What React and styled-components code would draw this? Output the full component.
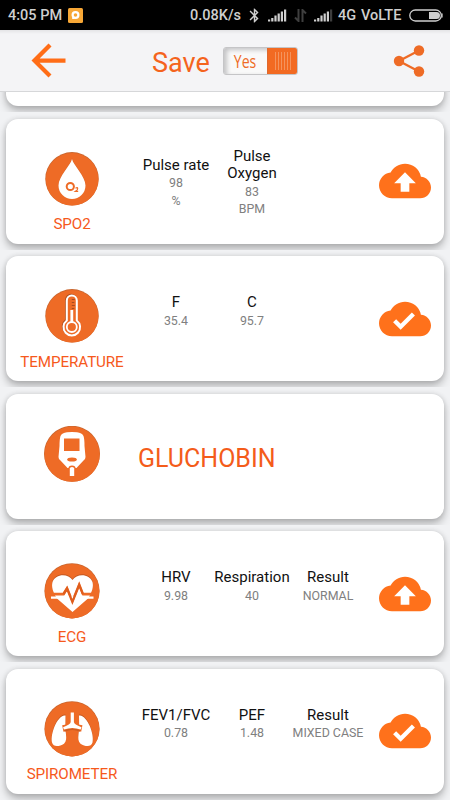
import styled, { createGlobalStyle } from 'styled-components'
import { MdArrowBack, MdBluetooth, MdCloudDone, MdCloudUpload } from 'react-icons/md'

const GlobalStyle = createGlobalStyle`
  * {
    box-sizing: border-box;
  }

  body {
    margin: 0;
    font-family: Roboto, sans-serif;
    background: #f1f2f4;
  }
`

const Screen = styled.div`
  width: 450px;
  height: 800px;
  overflow: hidden;
  display: flex;
  flex-direction: column;
  background: #f1f2f4;
`

const StatusBar = styled.div`
  height: 30px;
  flex-shrink: 0;
  display: flex;
  align-items: center;
  padding: 1px 7px 0 8px;
  background: #000;
  color: #cfcfcf;
  font-size: 14.5px;
  font-weight: 500;
  white-space: nowrap;

  svg {
    display: block;
    flex-shrink: 0;
  }
`

const StatusText = styled.span`
  width: ${(p) => p.$width}px;
  margin-right: ${(p) => p.$gap || 0}px;
`

const StatusIcons = styled.div`
  margin-left: auto;
  display: flex;
  align-items: center;
`

const SignalGroup = styled.div`
  display: flex;
  align-items: center;
  gap: 7px;
  margin: 0 5px;
`

const Header = styled.header`
  height: 62.2px;
  flex-shrink: 0;
  display: flex;
  align-items: center;
  justify-content: space-between;
  padding: 0 25px 0 23px;
  background: linear-gradient(#e4e4e6, #f4f4f6 4px);
  border-bottom: 1px solid #d6d7d9;
  color: #ff6d17;

  svg {
    display: block;
  }
`

const SaveGroup = styled.div`
  display: flex;
  align-items: center;
  gap: 13px;
  margin-right: 17px;
`

const SaveText = styled.span`
  width: 58px;
  padding-top: 4px;
  font-size: 27px;
  line-height: 32px;
  color: #f4631d;
  white-space: nowrap;
`

const Toggle = styled.div`
  width: 75px;
  height: 28px;
  display: flex;
  justify-content: space-between;
  border: 1px solid #c5c5c7;
  border-radius: 3px;
  overflow: hidden;
  background: #f9f9f9;
  box-shadow: inset 3px 2px 4px #c4c4c6;
`

const ToggleText = styled.span`
  width: 42px;
  font-family: 'Open Sans', sans-serif;
  font-size: 18.5px;
  line-height: 26px;
  text-align: center;
  transform: scaleX(0.76);
  color: #ee6b26;
`

const Thumb = styled.div`
  width: 31px;
  margin: -1px;
  display: flex;
  align-items: center;
  justify-content: center;
  gap: 2px;
  background: #f26a22;
  border: 1px solid #df6a2e;
  border-radius: 1px;
`

const Grip = styled.i`
  width: 1px;
  height: 18px;
  background: #f4935d;
`

const List = styled.main`
  flex: 1;
  min-height: 0;
  overflow: hidden;
  display: flex;
  flex-direction: column;
`

const Item = styled.div`
  height: ${(p) => p.$height || 137.5}px;
  flex-shrink: 0;
  overflow: hidden;
  display: flex;
  flex-direction: column;
  justify-content: flex-end;
  padding: 0 6px 6px;
`

const Card = styled.section`
  height: 125px;
  flex-shrink: 0;
  display: flex;
  align-items: center;
  padding-right: 13px;
  background: #fff;
  border-radius: 12px;
  box-shadow: 0 0 5px rgba(0, 0, 0, 0.12), 0 5px 8px rgba(0, 0, 0, 0.26);
`

const Device = styled.div`
  width: 132px;
  height: 125px;
  display: flex;
  flex-direction: column;
  align-items: center;
  padding-top: 32px;

  svg {
    display: block;
    flex-shrink: 0;
  }
`

const DeviceName = styled.span`
  margin-top: 8.5px;
  font-size: 15.2px;
  line-height: 18px;
  color: #f6591c;
  letter-spacing: -0.1px;
`

const BigName = styled.h2`
  margin: 5px 0 0;
  font-size: 25px;
  font-weight: 400;
  line-height: 30px;
  color: #f45c1a;
`

const Column = styled.div`
  width: 76px;
  display: flex;
  flex-direction: column;
  align-items: center;
  text-align: center;
  padding-top: 3.5px;
`

const ColumnTitle = styled.span`
  font-size: 15px;
  line-height: 17.5px;
  color: #111;
  margin: 0 -2px;
`

const ColumnValue = styled.span`
  min-height: 17.5px;
  font-size: 12.4px;
  line-height: 17.5px;
  color: #808080;
  white-space: nowrap;
`

const CloudIcon = styled.div`
  margin-left: auto;
  color: #ff711b;

  svg {
    display: block;
  }
`

const ORANGE = '#ee6b26'

function Badge({ r = 26.7, children }) {
  return (
    <svg width="56" height="56" viewBox="0 0 56 56">
      <circle cx="28" cy="27.800" r={r} fill="#c9662f" />
      <circle cx="28.100" cy="28.200" r={r - 0.4} fill={ORANGE} />
      {children}
    </svg>
  )
}

function DropIcon() {
  return (
    <Badge>
      <path d="M28 9c-1.500 6.500-13.500 17.500-13.500 26.500a13.500 13.500 0 0 0 27 0C41.500 26.500 29.500 15.500 28 9z" fill="#b9541f" opacity="0.5" transform="translate(0 -1.500)" />
      <path d="M28 8c-1.500 6.500-13.500 17.500-13.500 26.500a13.500 13.500 0 0 0 27 0C41.500 25.500 29.500 14.500 28 8z" fill="#fff" />
      <circle cx="26.300" cy="35.500" r="3.600" fill="none" stroke={ORANGE} strokeWidth="2" />
      <path d="M31.500 37.300q2-1.500 2.200 0t-2.200 3h2.700" fill="none" stroke={ORANGE} strokeWidth="1.200" />
    </Badge>
  )
}

function ThermometerIcon() {
  return (
    <Badge>
      <path d="M22.800 32.500V12.500a5 5 0 0 1 10 0v20a8.300 8.300 0 1 1-10 0z" fill="none" stroke="#ad4f20" strokeWidth="2" transform="translate(-0.700 -0.700)" />
      <path d="M22.800 32.500V12.500a5 5 0 0 1 10 0v20a8.300 8.300 0 1 1-10 0z" fill={ORANGE} stroke="#fff" strokeWidth="2" />
      <path d="M27.800 22v12" stroke="#fff" strokeWidth="2.800" />
      <circle cx="27.800" cy="39" r="5" fill={ORANGE} stroke="#fff" strokeWidth="1.800" />
      <path d="M27.800 11.500h3M27.800 14.500h2.500M27.800 17.500h3M27.800 20.500h2.500" stroke="#a94b1e" strokeWidth="1.200" />
    </Badge>
  )
}

function GlucometerIcon() {
  return (
    <Badge r={28}>
      <path d="M16.500 10Q18 7 23 6.300q5-.8 10 0Q38 7 39.500 10q1 3 1 10l1 11q0 2-2 3.500L32.500 42h-9l-7-7.500q-2-1.500-2-3.500l1-11q0-7 1-10z" fill="#fff" />
      <rect x="20" y="12.500" width="15.500" height="12.500" fill={ORANGE} />
      <ellipse cx="28" cy="33.500" rx="4.800" ry="2" fill={ORANGE} />
      <path d="M24.500 50V42q0-2.500 3.500-2.500t3.500 2.500v8z" fill={ORANGE} />
      <path d="M25.800 50V42.500q0-1.500 2.200-1.500t2.200 1.500V50z" fill="#fff" />
    </Badge>
  )
}

function HeartIcon() {
  const heart = 'M28.500 17C24 10 11.500 10.500 8.500 19c-1.300 5 .5 10 4.500 16.500L28.500 49 44 35.500c4-6.500 5.800-11.500 4.500-16.500C45.500 10.500 33 10 28.500 17z'
  return (
    <Badge r={27.6}>
      <path d={heart} fill="#a94b1e" opacity="0.6" transform="translate(0 -1)" />
      <path d={heart} fill="#fff" />
      <path d="M5 31.200h14.500l3.500-5.700 5.400 13.500 6.800-17 3.600 9.200H52" fill="none" stroke={ORANGE} strokeWidth="2.800" />
      <path d="M5 38.300l5.500-1.500L15 40l-4 3z" fill={ORANGE} />
      <path d="M7 34.700h42.500" stroke="#fff" strokeWidth="2.300" />
      <path d="M20.500 34.700l2.600-4 5.300 13 6.700-16.500 3 7.500" fill="none" stroke="#fff" strokeWidth="2" />
      <path d="M19.500 31.200l3.500-5.700 5.400 13.500 6.800-17 3.600 9.200" fill="none" stroke="#df5d1d" strokeWidth="2.200" />
    </Badge>
  )
}

function LungsIcon() {
  const left = 'M21.500 14.500c-4-1-8.500 5-10.800 10.500C8.300 31 7 37 8 41.500c1.300 5 7.500 4 12 1.200 2.500-2.300 2.400-5.500 2-9.200L21.300 27z'
  const right = 'M35 14.500c4-1 8.500 5 10.800 10.500 2.400 6 3.700 12 2.700 16.500-1.300 5-7.500 4-12 1.200-2.500-2.300-2.400-5.500-2-9.200l.7-6.500z'
  return (
    <Badge r={27.6}>
      <path d={left + right} fill="#a94b1e" opacity="0.6" transform="translate(0 -1)" />
      <path d={left + right} fill="#fff" />
      <path d="M28.300 20v3q-2 3-9.500 4.500M28.300 23q2 3 9.500 4.500" fill="none" stroke={ORANGE} strokeWidth="6.500" />
      <path d="M20.500 30q7.800-3.500 15.600 0" fill="none" stroke="#cf5c20" strokeWidth="1.600" />
      <path d="M26.700 11.500h3.200v9.500q0 2.500 7.600 5.200l-.8 2.300q-4.500-1.500-8.400-1.500t-8.400 1.500l-.8-2.300q7.600-2.700 7.600-5.200z" fill="#fff" />
    </Badge>
  )
}

function ShareIcon() {
  return (
    <svg width="32" height="34" viewBox="0 0 32 34" fill="#ee6b26" stroke="#ee6b26">
      <path d="M26 6.500L6 17l20 10.500" fill="none" strokeWidth="2.300" />
      <circle cx="6" cy="17" r="5.200" stroke="none" />
      <circle cx="26" cy="6.500" r="5.200" stroke="none" />
      <circle cx="26" cy="27.500" r="5.200" stroke="none" />
    </svg>
  )
}

function SignalIcon({ weak }) {
  const bars = [2, 3.5, 6, 8, 10, 12]
  return (
    <svg width="19" height="13" viewBox="0 0 19 13">
      {bars.map((h, i) => (
        <rect key={i} x={i * 3.2} y={12.5 - h} width="2.2" height={h} fill={weak && i === 5 ? '#3d3d3d' : '#cfcfcf'} />
      ))}
    </svg>
  )
}

function DataArrows() {
  return (
    <svg width="13" height="13" viewBox="0 0 13 13" fill="none" stroke="#3f3f3f" strokeWidth="2">
      <path d="M4.500 0v12L1 8.500M8.500 13V1L12 4.500" />
    </svg>
  )
}

function Battery() {
  return (
    <svg width="34" height="13" viewBox="0 0 34 13">
      <rect x="0.800" y="1" width="31.500" height="11" rx="5.500" fill="none" stroke="#cfcfcf" strokeWidth="1.300" />
      <path d="M20 3h7.500a3.500 3.500 0 0 1 0 7H20z" fill="#cfcfcf" />
      <path d="M33 4.500v4" stroke="#cfcfcf" strokeWidth="1.300" />
    </svg>
  )
}

function NoticeIcon() {
  return (
    <svg width="15" height="15" viewBox="0 0 15 15">
      <rect width="15" height="15" rx="1.500" fill="#f7a736" />
      <circle cx="7.500" cy="7" r="2.900" fill="none" stroke="#fff" strokeWidth="2.200" />
      <path d="M4.200 8v3h3z" fill="#fff" />
    </svg>
  )
}

const devices = [
  {
    name: 'SPO2',
    icon: DropIcon,
    cloud: MdCloudUpload,
    columns: [
      { title: 'Pulse rate', value: '98', unit: '%' },
      { title: 'Pulse Oxygen', value: '83', unit: 'BPM' }
    ]
  },
  {
    name: 'TEMPERATURE',
    icon: ThermometerIcon,
    cloud: MdCloudDone,
    columns: [
      { title: 'F', value: '35.4' },
      { title: 'C', value: '95.7' }
    ]
  },
  { name: 'GLUCHOBIN', icon: GlucometerIcon },
  {
    name: 'ECG',
    icon: HeartIcon,
    cloud: MdCloudUpload,
    columns: [
      { title: 'HRV', value: '9.98' },
      { title: 'Respiration', value: '40' },
      { title: 'Result', value: 'NORMAL' }
    ]
  },
  {
    name: 'SPIROMETER',
    icon: LungsIcon,
    cloud: MdCloudDone,
    columns: [
      { title: 'FEV1/FVC', value: '0.78' },
      { title: 'PEF', value: '1.48' },
      { title: 'Result', value: 'MIXED CASE' }
    ]
  }
]

function DeviceCard({ device }) {
  const { name, icon: Icon, cloud: Cloud, columns } = device

  return (
    <Item>
      <Card>
        <Device>
          <Icon />
          {columns && <DeviceName>{name}</DeviceName>}
        </Device>
        {columns ? (
          columns.map((col, index) => (
            <Column key={index}>
              <ColumnTitle>{col.title}</ColumnTitle>
              <ColumnValue>{col.value}</ColumnValue>
              <ColumnValue>{col.unit}</ColumnValue>
            </Column>
          ))
        ) : (
          <BigName>{name}</BigName>
        )}
        {Cloud && (
          <CloudIcon>
            <Cloud size={52} />
          </CloudIcon>
        )}
      </Card>
    </Item>
  )
}

export default function App() {
  return (
    <Screen>
      <GlobalStyle />
      <StatusBar>
        <StatusText $width={60}>4:05 PM</StatusText>
        <NoticeIcon />
        <StatusIcons>
          <StatusText $width={52} $gap={4}>0.08K/s</StatusText>
          <MdBluetooth size={17} />
          <SignalGroup>
            <SignalIcon />
            <DataArrows />
            <SignalIcon weak />
          </SignalGroup>
          <StatusText $width={18} $gap={5}>4G</StatusText>
          <StatusText $width={41} $gap={7}>VoLTE</StatusText>
          <Battery />
        </StatusIcons>
      </StatusBar>

      <Header>
        <MdArrowBack size={51} />
        <SaveGroup>
          <SaveText>Save</SaveText>
          <Toggle>
            <ToggleText>Yes</ToggleText>
            <Thumb>
              <Grip />
              <Grip />
              <Grip />
              <Grip />
              <Grip />
              <Grip />
            </Thumb>
          </Toggle>
        </SaveGroup>
        <ShareIcon />
      </Header>

      <List>
        {/* card scrolled almost out of view */}
        <Item $height={20}>
          <Card />
        </Item>
        {devices.map((device) => (
          <DeviceCard key={device.name} device={device} />
        ))}
      </List>
    </Screen>
  )
}
